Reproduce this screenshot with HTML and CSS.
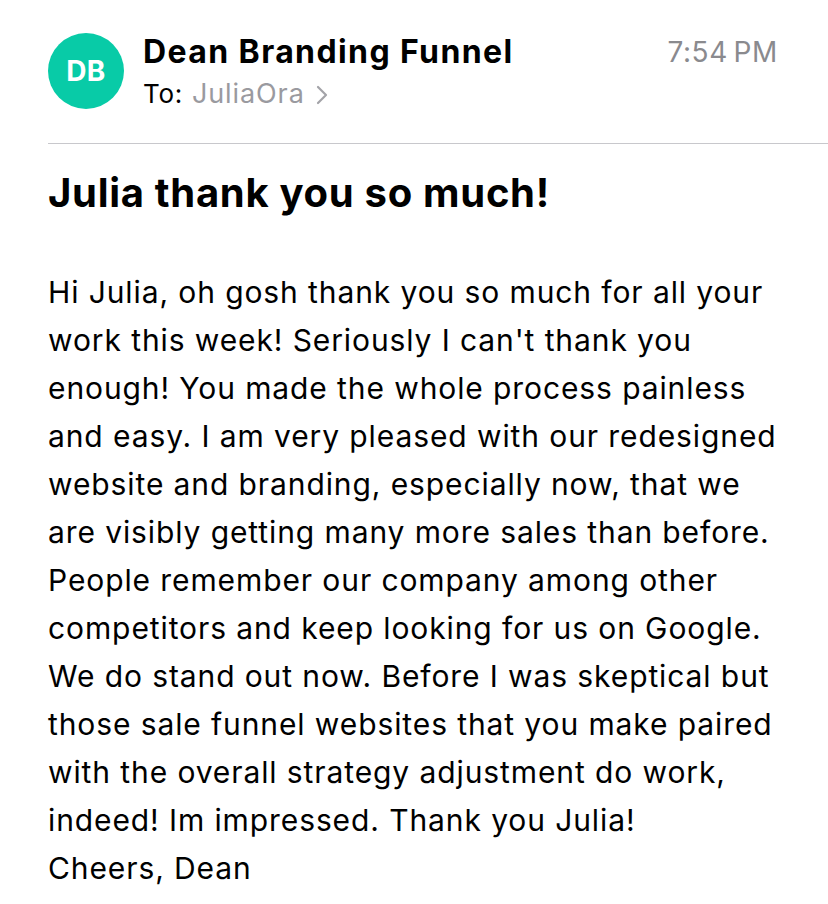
FILE: index.html
```html
<!DOCTYPE html>
<html>
<head>
<meta charset="utf-8">
<link rel="stylesheet" href="styles.css">
</head>
<body>
<div class="mail">
  <header class="head">
    <div class="avatar">DB</div>
    <div class="meta">
      <div class="from">Dean Branding Funnel</div>
      <div class="to"><span class="to-label">To:</span><span class="to-name">JuliaOra</span>
        <svg class="chev" width="12" height="20" viewBox="0 0 12 20"><path d="M2 2 L10 10 L2 18" fill="none" stroke="#a3a3a8" stroke-width="2.2" stroke-linecap="round" stroke-linejoin="round"/></svg>
      </div>
    </div>
    <div class="time">7:54&#8201;PM</div>
  </header>
  <div class="divider"></div>
  <h1 class="subject">Julia thank you so much!</h1>
  <div class="body">
    <span class="line">Hi Julia, oh gosh thank you so much for all your</span>
    <span class="line">work this week! Seriously I can't thank you</span>
    <span class="line">enough! You made the whole process painless</span>
    <span class="line">and easy. I am very pleased with our redesigned</span>
    <span class="line">website and branding, especially now, that we</span>
    <span class="line">are visibly getting many more sales than before.</span>
    <span class="line">People remember our company among other</span>
    <span class="line">competitors and keep looking for us on Google.</span>
    <span class="line">We do stand out now. Before I was skeptical but</span>
    <span class="line">those sale funnel websites that you make paired</span>
    <span class="line">with the overall strategy adjustment do work,</span>
    <span class="line">indeed! Im impressed. Thank you Julia!</span>
    <span class="line">Cheers, Dean</span>
  </div>
</div>
</body>
</html>
```
FILE: styles.css
```css
html, body {
  margin: 0;
  padding: 0;
  background: #ffffff;
}
body {
  font-family: Inter, "Noto Sans", "Liberation Sans", sans-serif;
  color: #000000;
  width: 828px;
  height: 904px;
  overflow: hidden;
}
.mail {
  padding-left: 48px;
}
.head {
  display: flex;
  align-items: flex-start;
  padding-top: 33px;
  padding-right: 50px;
  height: 110px;
  box-sizing: border-box;
}
.avatar {
  width: 76px;
  height: 76px;
  border-radius: 50%;
  background: #08cba7;
  color: #ffffff;
  font-weight: 700;
  font-size: 28px;
  display: flex;
  align-items: center;
  justify-content: center;
  flex-shrink: 0;
  letter-spacing: 0.5px;
}
.meta {
  margin-left: 19px;
  flex: 1;
}
.from {
  font-size: 32px;
  font-weight: 700;
  line-height: 38px;
  margin-top: 0px;
  letter-spacing: 1.4px;
}
.to {
  font-size: 26px;
  line-height: 32px;
  margin-top: 7px;
  display: flex;
  align-items: center;
  letter-spacing: 0.7px;
}
.to-label {
  color: #000;
  margin-right: 9px;
}
.to-name {
  color: #9a9a9f;
  font-size: 27px;
  letter-spacing: 0.9px;
}
.chev {
  margin-left: 11px;
  margin-top: 2px;
}
.time {
  font-size: 28px;
  color: #8a8a8e;
  line-height: 38px;
  margin-top: 0px;
  letter-spacing: 0.6px;
}
.divider {
  height: 1px;
  background: #c8c8cc;
  margin-top: 33px;
}
.subject {
  margin: 0;
  font-size: 40px;
  font-weight: 700;
  line-height: 44px;
  margin-top: 27px;
  letter-spacing: 0.7px;
}
.body {
  margin-top: 53px;
  font-size: 30px;
  line-height: 48px;
  letter-spacing: 0.9px;
}
.line {
  display: block;
  white-space: nowrap;
}
```
